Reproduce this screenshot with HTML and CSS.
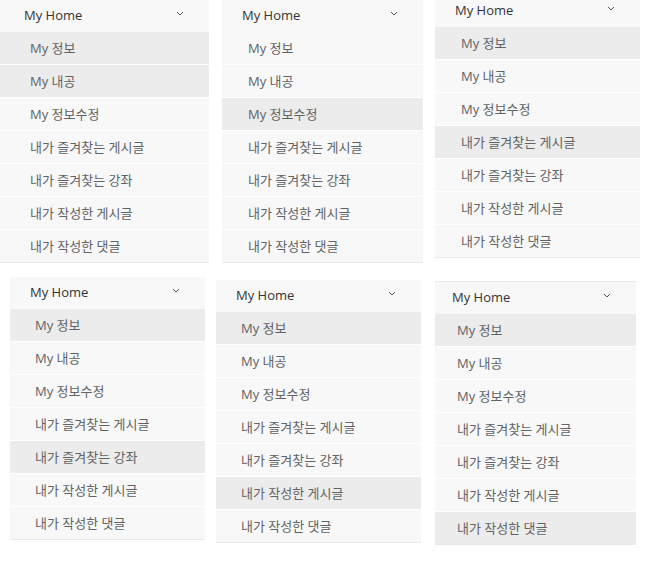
FILE: index.html
```html
<!DOCTYPE html>
<html lang="ko">
<head>
    <meta charset="UTF-8">
    <meta name="viewport" content="width=device-width, initial-scale=1.0">
    <title>My Home 메뉴</title>
    <link rel="stylesheet" href="styles.css">
</head>
<body>
    <div class="row row-top">
        <div class="menu shot-1">
            <div class="menu-head">My Home <svg class="chevron" viewBox="0 0 8 5"><path d="M1 1 L4 4 L7 1"/></svg></div>
            <div class="item active">My 정보</div>
            <div class="item active">My 내공</div>
            <div class="item">My 정보수정</div>
            <div class="item">내가 즐겨찾는 게시글</div>
            <div class="item">내가 즐겨찾는 강좌</div>
            <div class="item">내가 작성한 게시글</div>
            <div class="item">내가 작성한 댓글</div>
        </div>
        <div class="menu shot-2">
            <div class="menu-head">My Home <svg class="chevron" viewBox="0 0 8 5"><path d="M1 1 L4 4 L7 1"/></svg></div>
            <div class="item">My 정보</div>
            <div class="item">My 내공</div>
            <div class="item active">My 정보수정</div>
            <div class="item">내가 즐겨찾는 게시글</div>
            <div class="item">내가 즐겨찾는 강좌</div>
            <div class="item">내가 작성한 게시글</div>
            <div class="item">내가 작성한 댓글</div>
        </div>
        <div class="menu shot-3">
            <div class="menu-head">My Home <svg class="chevron" viewBox="0 0 8 5"><path d="M1 1 L4 4 L7 1"/></svg></div>
            <div class="item active">My 정보</div>
            <div class="item">My 내공</div>
            <div class="item">My 정보수정</div>
            <div class="item active">내가 즐겨찾는 게시글</div>
            <div class="item">내가 즐겨찾는 강좌</div>
            <div class="item">내가 작성한 게시글</div>
            <div class="item">내가 작성한 댓글</div>
        </div>
    </div>
    <div class="row row-bottom">
        <div class="menu shot-4">
            <div class="menu-head">My Home <svg class="chevron" viewBox="0 0 8 5"><path d="M1 1 L4 4 L7 1"/></svg></div>
            <div class="item active">My 정보</div>
            <div class="item">My 내공</div>
            <div class="item">My 정보수정</div>
            <div class="item">내가 즐겨찾는 게시글</div>
            <div class="item active">내가 즐겨찾는 강좌</div>
            <div class="item">내가 작성한 게시글</div>
            <div class="item">내가 작성한 댓글</div>
        </div>
        <div class="menu shot-5">
            <div class="menu-head">My Home <svg class="chevron" viewBox="0 0 8 5"><path d="M1 1 L4 4 L7 1"/></svg></div>
            <div class="item active">My 정보</div>
            <div class="item">My 내공</div>
            <div class="item">My 정보수정</div>
            <div class="item">내가 즐겨찾는 게시글</div>
            <div class="item">내가 즐겨찾는 강좌</div>
            <div class="item active">내가 작성한 게시글</div>
            <div class="item">내가 작성한 댓글</div>
        </div>
        <div class="menu shot-6">
            <div class="menu-head">My Home <svg class="chevron" viewBox="0 0 8 5"><path d="M1 1 L4 4 L7 1"/></svg></div>
            <div class="item active">My 정보</div>
            <div class="item">My 내공</div>
            <div class="item">My 정보수정</div>
            <div class="item">내가 즐겨찾는 게시글</div>
            <div class="item">내가 즐겨찾는 강좌</div>
            <div class="item">내가 작성한 게시글</div>
            <div class="item active">내가 작성한 댓글</div>
        </div>
    </div>
</body>
</html>
```

FILE: styles.css
```css
body {
    margin: 0;
    background-color: #ffffff;
    font-family: "Open Sans", "Noto Sans CJK KR", sans-serif;
    overflow: hidden;
}

.row {
    display: flex;
    align-items: flex-start;
}

.row-bottom {
    margin-top: 14px;
}

.menu {
    background-color: #f8f8f8;
    border-bottom: 1px solid #e9e9e9;
    --head-pad: 20px;
    --item-pad: 26px;
}

.menu-head {
    height: 32px;
    box-sizing: border-box;
    display: flex;
    align-items: center;
    justify-content: space-between;
    padding: 0 25px 2px var(--head-pad);
    font-size: 13px;
    color: #333333;
}

.chevron {
    width: 8px;
    height: 5px;
    margin-top: -4px;
    fill: none;
    stroke: #555555;
    stroke-width: 1;
}

.item {
    height: 32px;
    box-sizing: border-box;
    display: flex;
    align-items: center;
    padding-left: var(--item-pad);
    padding-bottom: 2px;
    font-size: 13px;
    color: #5e6365;
}

.item + .item {
    height: 33px;
    border-top: 1px solid #ffffff;
}

.item.active {
    background-color: #ececec;
}

/* each shot of the collage sits a little differently */
.shot-1 {
    width: 213px;
    margin-left: -4px;
    --head-pad: 28px;
    --item-pad: 34px;
}

.shot-2 {
    width: 201px;
    margin-left: 13px;
}

.shot-3 {
    width: 205px;
    margin-left: 12px;
    margin-top: -5px;
}

.shot-4 {
    width: 195px;
    margin-left: 10px;
    --item-pad: 25px;
}

.shot-5 {
    width: 205px;
    margin-left: 11px;
    margin-top: 3px;
    --item-pad: 25px;
}

.shot-6 {
    width: 201px;
    margin-left: 14px;
    margin-top: 4px;
    border-top: 1px solid #e9e9e9;
    --head-pad: 17px;
    --item-pad: 22px;
}
```
